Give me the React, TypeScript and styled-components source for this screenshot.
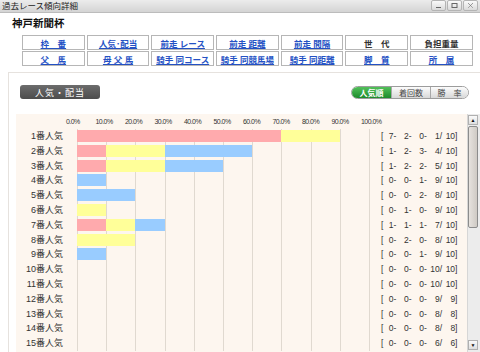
import styled, { createGlobalStyle } from "styled-components";

// page reset + fonts (Japanese needs the CJK family after the latin one)
const GlobalStyle = createGlobalStyle`
  html, body {
    margin: 0;
    padding: 0;
    background: #fff;
    overflow: hidden;
  }
  body {
    font-family: "Liberation Sans", "Noto Sans CJK JP", sans-serif;
    color: #222;
  }
`;

const Window = styled.div`
  width: 480px;
  height: 352px;
  display: flex;
  flex-direction: column;
  overflow: hidden;
  background: #fff;
`;

// grey window title bar with the three small buttons on the right
const TitleBar = styled.div`
  height: 12px;
  flex: none;
  display: flex;
  align-items: center;
  justify-content: space-between;
  padding-left: 2px;
  background: linear-gradient(#ececec, #d4d4d4);
  border-bottom: 1px solid #bcbcbc;
`;

const TitleText = styled.span`
  font-size: 8.5px;
  line-height: 12px;
  color: #222;
`;

const WinButtons = styled.div`
  display: flex;
  gap: 1px;
  padding-right: 2px;
  height: 12px;
`;

const WinButton = styled.div`
  width: 15px;
  height: 11px;
  box-sizing: border-box;
  border: 1px solid #b4b4b4;
  border-radius: 2px;
  background: linear-gradient(#fafafa, #dadada);
  display: flex;
  align-items: center;
  justify-content: center;
`;

const RaceTitle = styled.div`
  height: 22px;
  flex: none;
  padding-left: 12px;
  font-size: 10.5px;
  font-weight: bold;
  line-height: 20px;
  color: #111;
`;

// 7 x 2 grid of category buttons
const ButtonGrid = styled.div`
  flex: none;
  margin-left: 22px;
  display: grid;
  grid-template-columns: repeat(7, 62.7px);
  grid-auto-rows: 15px;
  column-gap: 2px;
  row-gap: 1px;
`;

const NavButton = styled.div<{ $link?: boolean }>`
  box-sizing: border-box;
  border: 1px solid #b6b6b6;
  background: #fff;
  display: flex;
  align-items: center;
  justify-content: center;
  font-size: 8.5px;
  font-weight: bold;
  white-space: pre;
  color: ${(p) => (p.$link ? "#2451c4" : "#333")};
  text-decoration: ${(p) => (p.$link ? "underline" : "none")};
`;

const Panel = styled.div`
  flex: 1;
  min-height: 0;
  margin: 6px 0 0 8px;
  border-top: 1px solid #e6e2de;
  border-left: 1px solid #e6e2de;
  display: flex;
  flex-direction: column;
`;

const PanelHeader = styled.div`
  flex: none;
  padding: 12px 11px 0 11px;
  display: flex;
  align-items: center;
  justify-content: space-between;
`;

const SectionPill = styled.div`
  width: 80px;
  height: 14px;
  border-radius: 3px;
  background: linear-gradient(#6c6c6c, #4c4c4c);
  color: #fff;
  font-size: 9px;
  letter-spacing: 1px;
  display: flex;
  align-items: center;
  justify-content: center;
`;

const Toggle = styled.div`
  display: flex;
  height: 13px;
  box-sizing: border-box;
  border: 1px solid #9c9c9c;
  border-radius: 7px;
  overflow: hidden;
`;

const ToggleItem = styled.div<{ $active?: boolean; $w: number }>`
  width: ${(p) => p.$w}px;
  display: flex;
  align-items: center;
  justify-content: center;
  font-size: 8px;
  white-space: pre;
  font-weight: ${(p) => (p.$active ? "bold" : "normal")};
  color: ${(p) => (p.$active ? "#fff" : "#444")};
  background: ${(p) =>
    p.$active ? "linear-gradient(#52c05a, #1d8b2b)" : "linear-gradient(#fcfcfc, #d8d8d8)"};
  & + & {
    border-left: 1px solid #a8a8a8;
  }
`;

const ChartArea = styled.div`
  flex: 1;
  min-height: 0;
  margin: 15px 0 0 7px;
  display: flex;
  overflow: hidden;
`;

const ChartBody = styled.div`
  flex: 1;
  background: #fdf6ef;
  display: flex;
  flex-direction: column;
`;

const AxisRow = styled.div`
  height: 14.6px;
  flex: none;
  display: flex;
  align-items: center;
  padding-left: 50px;
`;

const AxisLabel = styled.span`
  width: 29.5px;
  flex: none;
  font-size: 7px;
  letter-spacing: -0.55px;
  color: #333;
`;

const Row = styled.div`
  height: 14.8px;
  flex: none;
  display: flex;
  align-items: center;
`;

const RowLabel = styled.span`
  width: 47px;
  margin-right: 14px;
  text-align: right;
  font-size: 9px;
  line-height: 12px;
  color: #333;
  white-space: nowrap;
`;

// track carries the 10% grid lines; rows stack so the lines run on
const Track = styled.div`
  width: 293px;
  height: 100%;
  display: flex;
  align-items: center;
  background-image: repeating-linear-gradient(
    to right,
    #e0d9d0 0 1px,
    transparent 1px 29.2px
  );
`;

const Segment = styled.div<{ $color: string }>`
  height: 12px;
  background: ${(p) => p.$color};
`;

const DataCell = styled.div`
  margin-left: 11px;
  display: flex;
  font-size: 8.5px;
  line-height: 12px;
  color: #333;
`;

const Bracket = styled.span`
  width: 3px;
`;

const Field = styled.span<{ $w: number }>`
  width: ${(p) => p.$w}px;
  text-align: right;
  white-space: nowrap;
`;

const ScrollBar = styled.div`
  width: 13px;
  flex: none;
  box-sizing: border-box;
  padding: 1px 2px 2px 0;
  background: #ececec;
  border-left: 1px solid #d6d6d6;
  display: flex;
  flex-direction: column;
`;

const ScrollArrow = styled.div`
  height: 10px;
  flex: none;
  box-sizing: border-box;
  border: 1px solid #b0b0b0;
  background: linear-gradient(#fafafa, #dedede);
  font-size: 5px;
  color: #111;
  display: flex;
  align-items: center;
  justify-content: center;
`;

const ScrollThumb = styled.div`
  height: 102px;
  flex: none;
  margin-top: 1px;
  box-sizing: border-box;
  border: 1px solid #8c8c8c;
  border-radius: 2px;
  background: linear-gradient(to right, #e6e2de, #cfcac4);
`;

const ScrollSpace = styled.div`
  flex: 1;
`;

const COLORS = ["#ffaaad", "#ffff99", "#99ccff"];

// [1着, 2着, 3着, 着外, 出走]
const rows = [
  [7, 2, 0, 1, 10],
  [1, 2, 3, 4, 10],
  [1, 2, 2, 5, 10],
  [0, 0, 1, 9, 10],
  [0, 0, 2, 8, 10],
  [0, 1, 0, 9, 10],
  [1, 1, 1, 7, 10],
  [0, 2, 0, 8, 10],
  [0, 0, 1, 9, 10],
  [0, 0, 0, 10, 10],
  [0, 0, 0, 10, 10],
  [0, 0, 0, 9, 9],
  [0, 0, 0, 8, 8],
  [0, 0, 0, 8, 8],
  [0, 0, 0, 6, 6],
];

const buttons: [string, boolean][] = [
  ["枠　番", true],
  ["人気･配当", true],
  ["前走 レース", true],
  ["前走 距離", true],
  ["前走 間隔", true],
  ["世　代", false],
  ["負担重量", false],
  ["父　馬", true],
  ["母 父 馬", true],
  ["騎手 同コース", true],
  ["騎手 同競馬場", true],
  ["騎手 同距離", true],
  ["脚　質", true],
  ["所　属", true],
];

const axis = ["0.0%", "10.0%", "20.0%", "30.0%", "40.0%", "50.0%", "60.0%", "70.0%", "80.0%", "90.0%", "100.0%"];

const SCALE = 292;

export default function App() {
  return (
    <Window>
      <GlobalStyle />
      <TitleBar>
        <TitleText>過去レース傾向詳細</TitleText>
        <WinButtons>
          <WinButton>
            <svg width="7" height="7" viewBox="0 0 7 7">
              <rect x="1" y="5" width="5" height="1" fill="#666" />
            </svg>
          </WinButton>
          <WinButton>
            <svg width="7" height="7" viewBox="0 0 7 7">
              <rect x="1" y="1.5" width="5" height="4" fill="none" stroke="#666" strokeWidth="1" />
            </svg>
          </WinButton>
          <WinButton>
            <svg width="7" height="7" viewBox="0 0 7 7">
              <path d="M1 1 L6 6 M6 1 L1 6" stroke="#777" strokeWidth="1" strokeDasharray="1 0.6" />
            </svg>
          </WinButton>
        </WinButtons>
      </TitleBar>

      <RaceTitle>神戸新聞杯</RaceTitle>

      <ButtonGrid>
        {buttons.map(([label, link]) => (
          <NavButton key={label} $link={link}>
            {label}
          </NavButton>
        ))}
      </ButtonGrid>

      <Panel>
        <PanelHeader>
          <SectionPill>人気・配当</SectionPill>
          <Toggle>
            <ToggleItem $active $w={39}>人気順</ToggleItem>
            <ToggleItem $w={38}>着回数</ToggleItem>
            <ToggleItem $w={37}>勝　率</ToggleItem>
          </Toggle>
        </PanelHeader>

        <ChartArea>
          <ChartBody>
            <AxisRow>
              {axis.map((a) => (
                <AxisLabel key={a}>{a}</AxisLabel>
              ))}
            </AxisRow>
            {rows.map(([w, s, t, o, n], i) => (
              <Row key={i}>
                <RowLabel>{i + 1}番人気</RowLabel>
                <Track>
                  {[w, s, t].map((c, k) =>
                    c > 0 ? (
                      <Segment key={k} $color={COLORS[k]} style={{ width: (c / n) * SCALE }} />
                    ) : null
                  )}
                </Track>
                <DataCell>
                  <Bracket>[</Bracket>
                  <Field $w={12.3}>{w}-</Field>
                  <Field $w={15.3}>{s}-</Field>
                  <Field $w={15.3}>{t}-</Field>
                  <Field $w={15.3}>{o}/</Field>
                  <Field $w={15.3}>{n}]</Field>
                </DataCell>
              </Row>
            ))}
          </ChartBody>
          <ScrollBar>
            <ScrollArrow>▲</ScrollArrow>
            <ScrollThumb />
            <ScrollSpace />
            <ScrollArrow>▼</ScrollArrow>
          </ScrollBar>
        </ChartArea>
      </Panel>
    </Window>
  );
}
